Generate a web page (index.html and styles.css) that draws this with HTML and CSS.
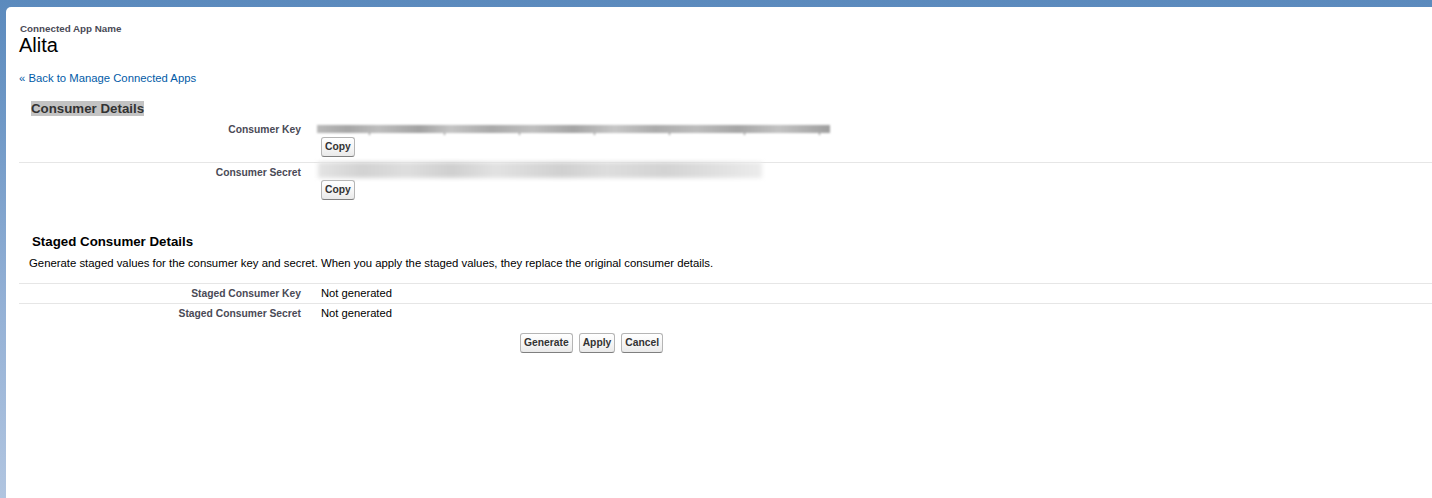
FILE: index.html
```html
<!DOCTYPE html>
<html lang="en">
<head>
<meta charset="utf-8">
<title>Connected App: Alita</title>
<link rel="stylesheet" href="styles.css">
</head>
<body>
<div class="page">
  <div class="panel">
    <div class="page-type">Connected App Name</div>
    <h1 class="page-title">Alita</h1>
    <a class="back-link" href="#">« Back to Manage Connected Apps</a>

    <h3 class="section-title"><span class="sel">Consumer Details</span></h3>
    <div class="detail-list">
      <div class="row">
        <div class="label">Consumer Key</div>
        <div class="value">
          <div class="blur-line"><span class="redact redact-key"></span></div>
          <button class="btn">Copy</button>
        </div>
      </div>
      <div class="row">
        <div class="label">Consumer Secret</div>
        <div class="value">
          <div class="blur-line"><span class="redact redact-secret"></span></div>
          <button class="btn">Copy</button>
        </div>
      </div>
    </div>

    <h3 class="section-title staged-title">Staged Consumer Details</h3>
    <p class="desc">Generate staged values for the consumer key and secret. When you apply the staged values, they replace the original consumer details.</p>
    <div class="detail-list staged-list">
      <div class="row">
        <div class="label">Staged Consumer Key</div>
        <div class="value">Not generated</div>
      </div>
      <div class="row">
        <div class="label">Staged Consumer Secret</div>
        <div class="value">Not generated</div>
      </div>
    </div>
    <div class="buttons">
      <button class="btn">Generate</button>
      <button class="btn">Apply</button>
      <button class="btn">Cancel</button>
    </div>
  </div>
</div>
</body>
</html>
```

FILE: styles.css
```css
html, body {
  margin: 0;
  padding: 0;
  height: 100%;
}
body {
  font-family: Arial, "Liberation Sans", Helvetica, sans-serif;
  background: linear-gradient(to bottom, #5b8abd 0px, #6f98c6 120px, #93b0d5 300px, #b1c5e0 498px);
  overflow: hidden;
}
.page {
  padding: 7px 0 0 6px;
  height: 100%;
  box-sizing: border-box;
}
.panel {
  background: #fff;
  border-top-left-radius: 5px;
  height: 100%;
  box-sizing: border-box;
  padding: 16px 0 0 13px;
}
.page-type {
  font-size: 9.8px;
  font-weight: bold;
  line-height: 11px;
  color: #4a4a56;
  padding-left: 1px;
}
.page-title {
  margin: 0;
  font-size: 20px;
  font-weight: normal;
  line-height: 22px;
  color: #000;
}
.back-link {
  display: block;
  margin-top: 15px;
  font-size: 11.3px;
  line-height: 14px;
  color: #015ba7;
  text-decoration: none;
}
.section-title {
  margin: 16px 0 0;
  padding-left: 12px;
  font-size: 13.3px;
  font-weight: bold;
  line-height: 15px;
  color: #333;
}
.sel {
  background: #c3c3c3;
}
.detail-list {
  margin-top: 4px;
}
.row {
  display: grid;
  grid-template-columns: 292px 1fr;
  padding: 3px 0 5px;
}
.row + .row {
  border-top: 1px solid #e6e6e6;
}
.label {
  text-align: right;
  padding-right: 10px;
  font-size: 10.3px;
  font-weight: bold;
  line-height: 13px;
  color: #4a4a56;
}
.value {
  padding-left: 10px;
  font-size: 11.2px;
  line-height: 13px;
  color: #000;
}
.blur-line {
  height: 13px;
  position: relative;
}
.redact {
  position: absolute;
  display: block;
}
.redact-key {
  left: -4px;
  top: 2px;
  width: 513px;
  height: 8px;
  background: linear-gradient(to right, #b9b9b9 0%, #a6a6a6 6%, #bdbdbd 12%, #a2a2a2 20%, #c4c4c4 26%, #a9a9a9 34%, #bfbfbf 42%, #a4a4a4 50%, #c6c6c6 58%, #ababab 66%, #bcbcbc 74%, #a5a5a5 82%, #c2c2c2 90%, #9e9e9e 100%);
  filter: blur(0.8px);
}
.redact-key::after {
  content: "";
  position: absolute;
  left: 0;
  right: 0;
  bottom: -2px;
  height: 2px;
  background: repeating-linear-gradient(to right, transparent 0 52px, #444 52px 53px, transparent 53px 75px);
  opacity: 0.7;
}
.redact-secret {
  left: -3px;
  top: -4px;
  width: 444px;
  height: 16px;
  background: linear-gradient(to right, #e4e4e4 0%, #d2d2d2 10%, #dedede 20%, #cfcfcf 30%, #e2e2e2 40%, #d0d0d0 55%, #dddddd 65%, #d3d3d3 78%, #e0e0e0 90%, #ececec 100%);
  filter: blur(2px);
}
.btn {
  display: inline-block;
  margin: 1px 0 0;
  padding: 3px 3px;
  font-family: Arial, "Liberation Sans", Helvetica, sans-serif;
  font-size: 10.3px;
  font-weight: bold;
  line-height: 12px;
  color: #333;
  background: linear-gradient(to bottom, #ffffff 0%, #f4f4f4 60%, #e9e9e9 100%);
  border: 1px solid #b5b5b5;
  border-bottom-color: #7f7f7f;
  border-radius: 3px;
  cursor: pointer;
}
.staged-title {
  margin-top: 29px;
  padding-left: 13px;
  color: #000;
}
.desc {
  margin: 7px 0 0;
  padding-left: 10px;
  font-size: 11.35px;
  line-height: 14px;
  color: #000;
}
.staged-list {
  margin-top: 13px;
}
.staged-list .row {
  border-top: 1px solid #e6e6e6;
  padding: 3px 0 3px;
}
.buttons {
  display: flex;
  gap: 6px;
  padding-left: 501px;
  margin-top: 10px;
}
.buttons .btn {
  margin: 0;
}
```
